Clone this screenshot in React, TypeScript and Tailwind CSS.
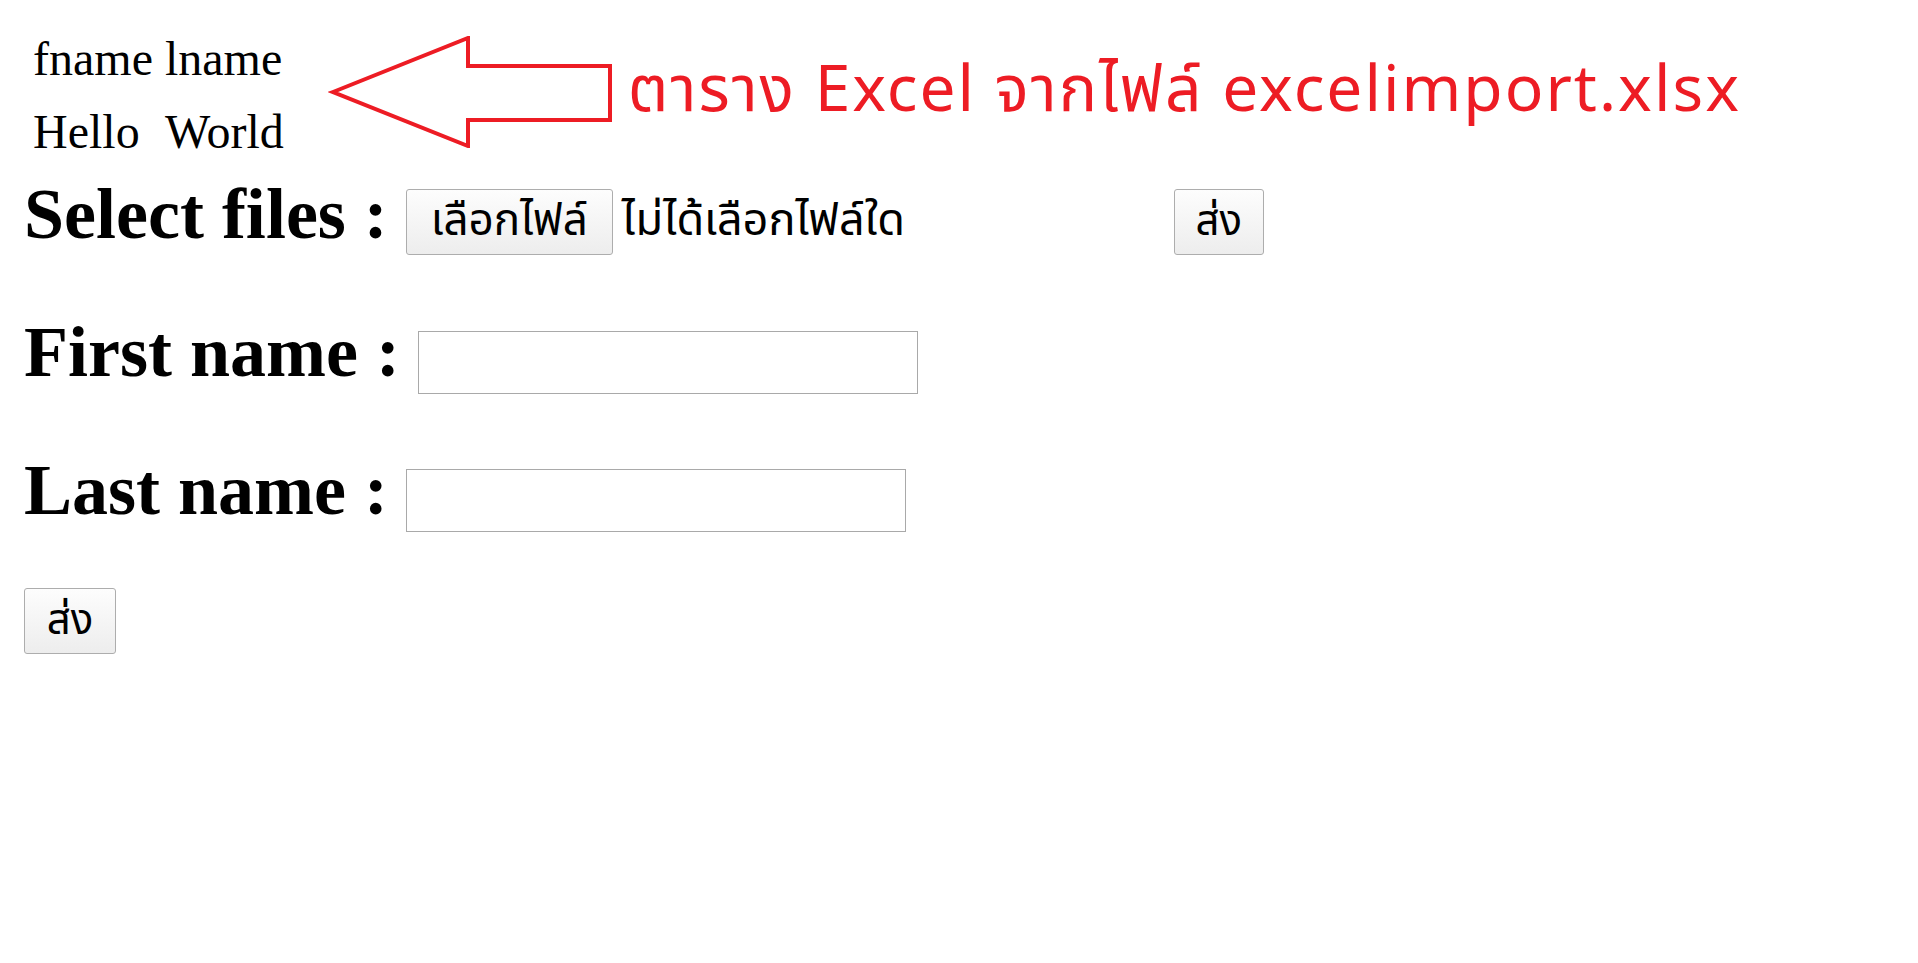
const serif = "font-['Liberation_Serif','Times_New_Roman',serif]";
const thai = "font-['Noto_Sans_Thai','Noto_Sans_Thai_UI','Leelawadee_UI',Tahoma,'Noto_Sans',sans-serif]";

function Btn({ children, className = "" }: { children: React.ReactNode; className?: string }) {
  return (
    <button
      type="button"
      className={`h-[66px] rounded-[3px] border border-[#adadad] bg-gradient-to-b from-[#fdfdfd] to-[#ededed] leading-none text-black ${thai} ${className}`}
    >
      {children}
    </button>
  );
}

export default function App() {
  return (
    <div className="min-h-screen w-full bg-white px-6 pt-[19px] pb-6 text-black">
      {/* table + annotation */}
      <div className="flex items-start">
        <table className={`border-separate border-spacing-[6px] text-[48px] leading-[61px] ${serif}`}>
          <tbody>
            <tr>
              <td className="p-[3px]">fname</td>
              <td className="p-[3px]">lname</td>
            </tr>
            <tr>
              <td className="p-[3px]">Hello</td>
              <td className="p-[3px]">World</td>
            </tr>
          </tbody>
        </table>

        <svg width="284" height="112" viewBox="0 0 284 112" className="ml-[35px] mt-[17px] shrink-0">
          <polygon
            points="5,56 140,2 140,30 282,30 282,84 140,84 140,110"
            fill="none"
            stroke="#ED1C24"
            strokeWidth="4"
            strokeLinejoin="miter"
          />
        </svg>

        <span
          className={`ml-[16px] mt-[41px] whitespace-nowrap text-[64px] leading-[64px] tracking-[2px] text-[#ED1C24] ${thai}`}
        >
          ตาราง Excel จากไฟล์ excelimport.xlsx
        </span>
      </div>

      {/* form */}
      <form className="flex flex-col">
        <div className="mt-[9px] flex h-[83px] items-center gap-[18px]">
          <h2 className={`mb-[14px] text-[72px] font-bold leading-[83px] ${serif}`}>Select files :</h2>
          <div className="flex w-[750px] items-center gap-[9px]">
            <Btn className="w-[207px] text-[44px]">เลือกไฟล์</Btn>
            <span className={`text-[45px] leading-none ${thai}`}>ไม่ได้เลือกไฟล์ใด</span>
          </div>
          <Btn className="w-[90px] text-[42px]">ส่ง</Btn>
        </div>

        <div className="mt-[58px] flex h-[83px] items-center gap-[18px]">
          <h2 className={`mb-[20px] text-[72px] font-bold leading-[83px] ${serif}`}>First name :</h2>
          <input type="text" className="h-[63px] w-[500px] border border-[#a9a9a9] bg-white outline-none" />
        </div>

        <div className="mt-[55px] flex h-[83px] items-center gap-[18px]">
          <h2 className={`mb-[20px] text-[72px] font-bold leading-[83px] ${serif}`}>Last name :</h2>
          <input type="text" className="h-[63px] w-[500px] border border-[#a9a9a9] bg-white outline-none" />
        </div>

        <div className="mt-[46px]">
          <Btn className="w-[92px] text-[42px]">ส่ง</Btn>
        </div>
      </form>
    </div>
  );
}
